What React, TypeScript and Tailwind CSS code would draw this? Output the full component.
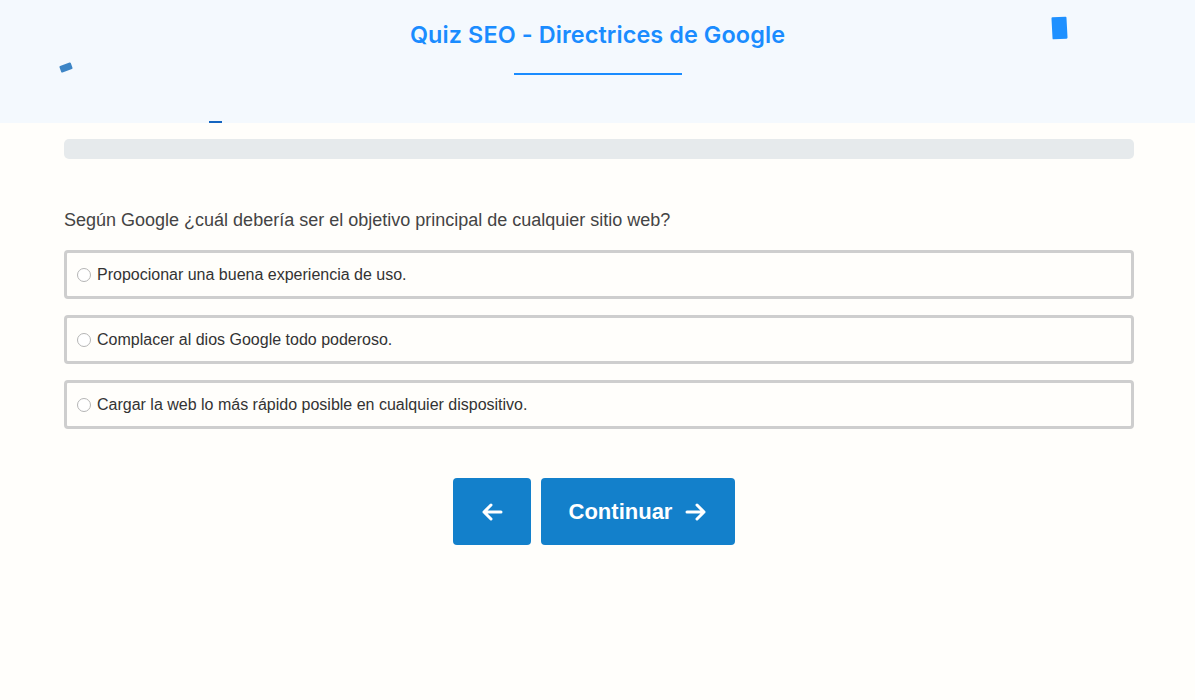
import React from "react";

const options = [
  "Propocionar una buena experiencia de uso.",
  "Complacer al dios Google todo poderoso.",
  "Cargar la web lo más rápido posible en cualquier dispositivo.",
];

export default function App() {
  return (
    <div className="min-h-[700px] w-full bg-[#fffefb]" style={{ fontFamily: '"Liberation Sans", Arial, sans-serif' }}>
      <header className="relative h-[123px] bg-[#f4f9fe] flex flex-col items-center">
        <h1
          className="mt-[19px] text-[23.4px] leading-[32px] font-semibold text-[#1a8cff] tracking-[0.1px]"
          style={{ fontFamily: 'Inter, "Noto Sans", sans-serif' }}
        >
          Quiz SEO - Directrices de Google
        </h1>
        <div className="mt-[22px] h-[1.5px] w-[168px] bg-[#1a8cff]" />
        <span className="absolute left-[60px] top-[64px] h-[7px] w-[12px] rounded-[1px] bg-[#3d85c6] rotate-[-20deg]" />
        <span className="absolute left-[1052px] top-[17px] h-[22px] w-[15px] rounded-[1px] bg-[#1e90ff] rotate-[-3deg]" />
        <span className="absolute left-[209px] top-[121px] h-[2px] w-[13px] bg-[#1565c0]" />
      </header>

      <main className="px-[64px] pt-[16px]">
        <div className="w-[1070px] h-[20px] rounded-[5px] bg-[#e6eaec]" />

        <p className="mt-[50px] text-[18px] leading-[22px] text-[#444]">
          Según Google ¿cuál debería ser el objetivo principal de cualquier sitio web?
        </p>

        <div className="mt-[19px] flex flex-col gap-[16px] w-[1070px]">
          {options.map((o) => (
            <label
              key={o}
              className="flex items-center h-[49px] border-[3px] border-[#cecece] rounded-[4px] pl-[10px] text-[16px] text-[#333]"
            >
              <span className="inline-block w-[14px] h-[14px] rounded-full border border-[#b5b5b5] bg-white mr-[6px]" />
              {o}
            </label>
          ))}
        </div>

        <div className="mt-[49px] flex justify-center gap-[10px] pr-[7px]">
          <button className="w-[78px] h-[67px] rounded-[4px] bg-[#1380cb] text-white flex items-center justify-center">
            <svg width="22" height="18" viewBox="0 0 22 18" fill="none" stroke="white" strokeWidth="3" strokeLinecap="round" strokeLinejoin="round">
              <path d="M20 9H3M10 2L3 9l7 7" />
            </svg>
          </button>
          <button className="w-[194px] h-[67px] rounded-[4px] bg-[#1380cb] text-white flex items-center justify-center gap-[13px] text-[22px] font-bold">
            Continuar
            <svg width="22" height="18" viewBox="0 0 22 18" fill="none" stroke="white" strokeWidth="3" strokeLinecap="round" strokeLinejoin="round">
              <path d="M2 9h17M12 2l7 7-7 7" />
            </svg>
          </button>
        </div>
      </main>
    </div>
  );
}
